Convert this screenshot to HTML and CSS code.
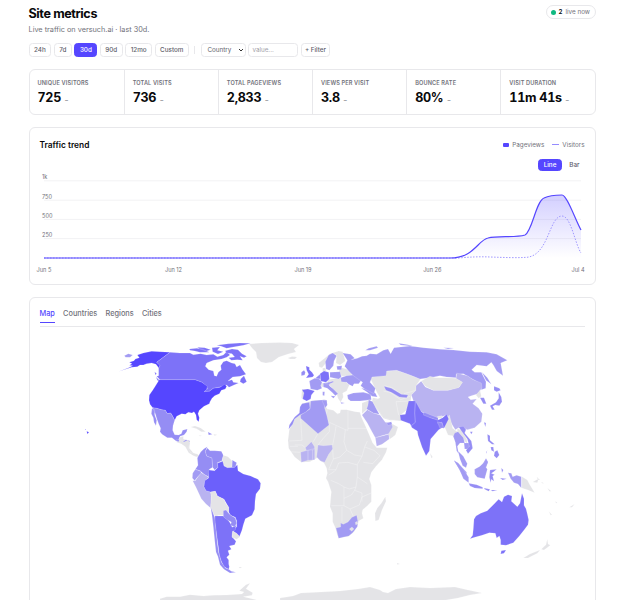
FILE: index.html
```
<!DOCTYPE html>
<html lang="en">
<head>
    <meta charset="utf-8">
    <title>Site metrics</title>
    <link rel="stylesheet" href="styles.css">
</head>
<body>
    <div class="page">
        <header class="header">
            <div>
                <h1>Site metrics</h1>
                <p class="subtitle">Live traffic on versuch.ai · last 30d.</p>
            </div>
            <div class="live"><span class="dot"></span><b>2</b><span>live now</span></div>
        </header>

        <div class="filters">
            <button>24h</button>
            <button>7d</button>
            <button class="active">30d</button>
            <button>90d</button>
            <button>12mo</button>
            <button>Custom</button>
            <span class="divider"></span>
            <div class="select">
                <select><option>Country</option></select>
                <svg viewBox="0 0 6 4"><path d="M1 1l2 2 2-2"/></svg>
            </div>
            <input type="text" placeholder="value...">
            <button class="add">+ Filter</button>
        </div>

        <section class="stats">
            <div class="stat"><h2>Unique visitors</h2><p>725 <small>–</small></p></div>
            <div class="stat"><h2>Total visits</h2><p>736 <small>–</small></p></div>
            <div class="stat"><h2>Total pageviews</h2><p>2,833 <small>–</small></p></div>
            <div class="stat"><h2>Views per visit</h2><p>3.8 <small>–</small></p></div>
            <div class="stat"><h2>Bounce rate</h2><p>80% <small>–</small></p></div>
            <div class="stat"><h2>Visit duration</h2><p>11m 41s <small>–</small></p></div>
        </section>

        <section class="card trend">
            <div class="card-head">
                <h3>Traffic trend</h3>
                <div class="legend">
                    <span class="key-box"></span><span>Pageviews</span>
                    <span class="key-line"></span><span>Visitors</span>
                </div>
            </div>
            <div class="toggle">
                <button class="active">Line</button>
                <button>Bar</button>
            </div>
            <svg class="chart" viewBox="34 172 557 104">
                <defs>
                    <linearGradient id="fill" x1="0" y1="0" x2="0" y2="1">
                        <stop offset="0" stop-color="#5546ff" stop-opacity=".26"/>
                        <stop offset="1" stop-color="#5546ff" stop-opacity="0"/>
                    </linearGradient>
                </defs>
                <path class="grid" d="M44 180.8H581M44 200.2H581M44 219.4H581M44 238.6H581"/>
                <path fill="url(#fill)" d="M450 258C474 258 478 240 488 238C498 235.500 515 238 525 235C532 232 536 201 544 198C550 195 556 195 562 195C567 195 575 219 581 230V258Z"/>
                <path class="visitors" d="M44 258H458C470 257 480 256.500 490 257C505 257.500 516 258 527 257.300C549 255 549 216 562 216C571 216 575 244 581 253"/>
                <path class="views" d="M44 258H450C474 258 478 240 488 238C498 235.500 515 238 525 235C532 232 536 201 544 198C550 195 556 195 562 195C567 195 575 219 581 230"/>
                <g class="ylabels">
                    <text x="42" y="179.300">1k</text>
                    <text x="42" y="198.600">750</text>
                    <text x="42" y="217.900">500</text>
                    <text x="42" y="237.200">250</text>
                </g>
                <g class="xlabels">
                    <text x="44" y="271.600">Jun 5</text>
                    <text x="173.500" y="271.600">Jun 12</text>
                    <text x="303" y="271.600">Jun 19</text>
                    <text x="432.300" y="271.600">Jun 26</text>
                    <text x="578" y="271.600">Jul 4</text>
                </g>
            </svg>
        </section>

        <section class="card places">
            <nav class="tabs">
                <a class="active">Map</a>
                <a>Countries</a>
                <a>Regions</a>
                <a>Cities</a>
            </nav>
            <svg class="map" viewBox="40 335 545 275">
                <!-- Greenland, Iceland, Arctic -->
                <path class="c0" d="M249 344L262 343 280 342.500 292 343 299 345 294 349 296 352 288 354 279 357 272 362 266 363 261 362 257 358 256 352 252 348ZM288 358L292 356.500 297 357 295 359 290 359Z"/>

                <!-- North and Central America -->
                <g transform="translate(80 335) scale(.33333)">
                    <path class="c5" d="M148 82L162 77 166 72 178 68 172 60 190 54 215 49 240 50 270 52 230 82 240 90 238 101 228 88 215 84 200 86 190 90 180 90 172 95 155 97 118 109 146 98 158 92 148 91 156 86Z"/>
                    <path class="c2" d="M133 62L145 56 158 60 150 67 137 67Z"/>
                    <path class="c4" d="M270 52L300 54 330 54 340 59 362 56 380 60 400 58 412 65 430 60 440 50 450 60 440 67 425 72 400 76 380 84 376 94 386 104 400 108 403 122 410 124 415 112 424 104 422 92 430 80 440 77 455 84 465 86 470 96 480 90 488 104 498 118 480 124 458 126 444 138 456 134 460 142 476 144 462 150 447 157 440 150 420 156 400 160 386 170 372 170 382 162 380 154 366 142 345 134 240 134 230 124 236 122 236 100 240 92 230 82Z"/>
                    <path class="c4" d="M328 42L350 40 366 42 388 52 360 52 345 48 330 46ZM352 37L374 38 392 44 380 48 360 42ZM396 38L420 36 412 46 430 50 414 57 398 50ZM410 31L445 26 480 24 512 25 490 31 460 36 440 40 424 34ZM436 47L456 42 474 44 486 56 500 64 492 68 480 64 488 76 472 74 454 76 446 68 464 66 456 56 438 54ZM482 132L492 122 500 140 490 146 480 140Z"/>
                    <path class="c4" d="M224 110L230 116 226 120ZM228 126L238 136 244 144 232 136Z"/>
                    <path class="c5" d="M238 134L345 134 366 142 382 154 380 164 372 170 388 169 400 160 420 157 434 148 440 154 436 162 424 166 418 176 404 182 396 190 390 200 388 206 372 214 358 226 354 236 358 248 356 260 350 254 348 240 342 230 336 234 325 232 316 238 305 236 290 244 284 256 278 244 272 234 262 236 256 226 244 224 230 220 218 218 210 208 207 196 208 180 218 166 228 150 234 140Z"/>
                    <path class="c3" d="M218 218L230 220 244 224 256 226 262 236 272 234 278 244 284 256 279 272 278 286 284 299 296 300 304 296 308 286 322 282 320 290 312 300 300 304 296 316 288 318 276 308 262 308 246 298 240 290 242 280 236 266 230 250 226 236ZM216 220L224 224 224 240 230 256 228 272 222 262 220 248 214 236Z"/>
                    <path class="c0" d="M296 314L300 306 310 304 310 312 330 318 328 340 340 354 352 360 344 364 326 350 318 334 304 326 290 322ZM332 276L345 273 362 279 377 290 364 290 350 281ZM400 298L412 299 404 302ZM356 301L366 302 360 304Z"/>
                    <path class="c3" d="M288 314L298 314 296 320 288 318ZM306 322L318 314 330 318 322 326 308 326ZM384 291L397 298 386 300Z"/>
                    <path class="c5" d="M20 289L27 292 22 297ZM16 282L18 284 15 284Z"/>
                </g>

                <!-- South America -->
                <g transform="translate(160 430) scale(.33333)">
                    <path class="c0" d="M60 30L72 36 84 30 90 40 84 54 92 68 112 72 120 80 108 80 98 76 86 68 76 50 60 38Z"/>
                    <path class="c3" d="M122 66L132 56 142 50 136 64 140 78 156 84 158 112 148 118 146 140 134 134 120 122 106 118 114 106 112 84Z"/>
                    <path class="c3" d="M142 54L150 62 165 62 184 64 190 76 186 92 172 98 174 112 164 120 158 112 156 84 140 78 136 64Z"/>
                    <path class="c0" d="M190 76L204 80 216 92 216 112 202 113 192 108 186 94Z"/>
                    <path class="c3" d="M217 90L230 98 226 112 216 112Z"/>
                    <path class="c2" d="M106 118L122 124 124 130 112 142 104 152 97 144 98 130Z"/>
                    <path class="c1" d="M98 152L106 152 114 140 124 128 134 134 146 142 134 154 132 170 138 182 152 186 154 200 152 234 138 222 124 206 108 172Z"/>
                    <path class="c5 brazil" d="M146 120L164 122 174 112 172 100 188 94 192 108 202 113 224 112 232 104 234 122 250 132 272 138 294 148 302 160 300 176 288 192 285 214 284 238 276 256 256 266 250 284 246 300 238 320 226 308 218 302 230 290 230 272 226 262 212 256 206 246 206 232 192 208 172 198 166 184 152 186 138 182 132 170 134 152 146 144Z"/>
                    <path class="c0" d="M152 186L166 184 172 198 192 208 197 220 206 232 206 248 196 240 190 256 176 256 166 260 158 246 152 234 154 200Z"/>
                    <path class="c4" d="M165 258L190 258 204 270 214 284 216 292 228 286 226 300 218 304 216 320 228 334 224 344 208 348 214 358 204 362 208 374 200 382 206 390 206 402 208 410 206 418 192 410 184 394 178 376 175 350 172 330 168 300 164 270Z"/>
                    <path class="c3" d="M190 242L198 240 206 250 212 256 226 264 230 280 224 290 212 286 214 276 202 270 190 260Z"/>
                    <path class="c0" d="M218 304L230 310 240 320 230 328 216 322Z"/>
                    <path class="c3" d="M152 232L158 246 164 262 168 300 172 340 176 368 184 396 196 414 206 418 214 424 228 427 210 429 192 418 180 404 174 380 168 366 164 330 160 290 156 256Z"/>
                    <path class="c0" d="M236 411L246 411 240 415ZM0 506L20 500 60 500 90 494 130 498 160 496 200 495 246 492 252 486 238 482 258 464 270 460 258 476 278 488 276 496 250 500 290 510 290 520 0 520Z"/>
                </g>

                <!-- Europe, Africa and the Middle East -->
                <g transform="translate(280 335) scale(.33333)">
                    <path class="c0" d="M66 206L80 202 104 196 138 194 142 200 136 212 142 222 160 226 172 236 180 234 182 224 200 224 226 230 240 232 244 246 256 272 268 300 278 324 290 338 322 338 318 352 306 374 288 394 274 412 268 432 274 450 274 500 262 512 248 524 246 535 250 550 236 558 234 568 222 590 206 604 176 610 172 600 166 578 158 560 158 535 150 515 152 490 154 470 144 440 138 430 142 415 140 400 132 384 118 376 112 368 90 380 64 382 44 366 26 340 24 316 28 284 44 250 60 234Z"/>
                    <path class="border" d="M142 222L138 244 148 270 148 290 130 310 114 330M62 250L66 316 28 318M114 296L100 320M204 226L204 286 196 284 148 262M204 280H260M196 284L192 320 200 346 180 366 160 372 158 342 M158 330L164 300 168 274M200 346L224 360 246 364 254 336 262 318M246 364L232 388 232 426 262 446M254 336L282 346 300 362 278 386 250 382M160 372L146 404 168 404 176 384 204 382 232 390M146 420L162 410 168 404M152 436L176 446 192 456 208 462 228 456 232 426M192 456L192 512 154 512M192 490L214 480 224 466 228 456M192 512L210 522 238 510 246 486 274 474M224 466L246 474 246 500M186 516L186 560M210 522L222 548M44 330L66 330 76 338M26 350L62 352M30 334L54 334"/>
                    <path class="c2" d="M92 198L134 194 134 220 140 240 147 270 114 296 62 250 62 240 90 222Z"/>
                    <path class="c3" d="M66 206L88 202 90 220 76 232 60 240 44 252 38 268 26 283 28 270 44 246 58 234 60 216Z"/>
                    <path class="c1" d="M62 352L82 346 104 340 104 374 84 376 64 382ZM76 338L94 320 104 336 102 344 80 347ZM114 330L130 332 156 330 158 342 146 358 134 382 122 378 110 366Z"/>
                    <path class="border" d="M84 346V376M98 344V374"/>
                    <path class="c2" d="M168 579L182 576 182 564 190 568 204 561 216 547 230 541 234 561 232 575 218 593 206 603 188 607 176 610Z"/>
                    <path class="c0" d="M208 582L216 576 222 582 215 589ZM226 562L232 559 234 567 227 569Z"/>
                    <path class="c0" d="M316 485L318 499 306 525 296 555 286 558 285 535 292 519 304 505Z"/>

                    <path class="c0" d="M66 162L64 190 72 192 76 168ZM116 84L134 70 150 56 176 48 188 50 196 78 180 90 168 84 170 60 158 56 144 70 138 84 126 98 118 96ZM178 96L206 104 218 122 184 124 178 110ZM140 134L184 128 208 150 200 168 188 174 190 186 182 202 174 190 170 176 156 158 146 148ZM118 142L136 146 128 156 120 154ZM128 100L136 98 138 108 128 110Z"/>
                    <path class="c2" d="M88 138L104 130 116 130 126 142 122 152 126 160 112 166 92 162Z"/>
                    <path class="c4" d="M66 164L84 162 104 168 94 180 92 192 80 198 68 192 72 174Z"/>
                    <path class="c4" d="M78 93L88 97 88 104 96 112 102 121 98 126 78 129 86 118 80 106ZM120 116L132 108 146 112 148 132 138 142 122 138Z"/>
                    <path class="c3" d="M64 112L72 106 76 112 74 120 64 122ZM106 130L120 118 122 132Z"/>
                    <path class="c2" d="M150 112L180 110 184 126 176 132 150 127ZM138 102L136 80 146 60 158 54 170 62 162 78 160 92 148 106ZM130 144L148 142 148 152 160 162 174 176 166 182 156 172 142 160 130 156ZM182 128L200 122 220 120 244 136 236 146 222 146 218 154 206 148 200 142 184 140ZM202 180L220 174 250 172 272 178 274 194 240 198 212 198 204 192ZM244 160L262 162 286 174 292 186 276 184 262 172Z"/>
                    <path class="c2" d="M128 170L134 170 133 182 128 181ZM152 182L166 184 160 190ZM182 202L194 204 184 206ZM170 94L186 92 184 104 172 104ZM134 146L160 138 160 142 146 148ZM126 197L140 195 142 210 136 218Z"/>
                    <path class="c0" d="M246 204L268 196 262 222 246 236ZM278 188L300 192 330 200 355 196 360 230 362 256 330 256 310 250 290 222 276 202ZM336 266L354 276 346 300 330 312 324 296Z"/>
                    <path class="c1" d="M246 240L262 224 280 234 300 240 316 262 334 264 338 276 326 296 300 304 286 308 276 290 262 264ZM286 308L326 298 328 312 306 328 290 334Z"/>
                    <path class="c2" d="M266 194L278 200 288 220 298 238 280 234 260 222 264 210ZM320 264L334 260 336 268 324 272Z"/>
                </g>

                <!-- Asia -->
                <g transform="translate(380 335) scale(.33333)">
                    <path class="c0" d="M-30 128L0 116 20 108 50 106 80 116 122 132 108 152 108 166 94 180 92 200 84 222 62 240 62 258 34 254 10 248 -22 200 0 188 -10 170Z"/>
                    <path class="border" d="M10 168L30 172 62 194 90 184M14 152L36 158 76 186M48 200L90 198M48 200L56 240M108 166L72 176"/>
                    <path class="c3" d="M12 154L34 160 64 178 84 180 80 188 58 186 34 172 18 166Z"/>
                    <path class="c2" d="M-112 54L-88 58 -76 70 -86 74 -68 70 -54 64 -40 62 -30 56 -10 58 10 46 24 42 32 56 42 38 90 33 130 38 180 43 220 45 270 50 320 52 350 58 382 76 362 84 369 122 350 108 340 90 334 82 320 94 290 90 275 104 284 112 304 112 318 140 317 160 304 164 302 146 276 132 250 116 228 118 228 128 200 126 180 122 150 128 120 132 100 124 80 116 50 106 20 108 18 122 -24 126 -30 142 -14 160 -18 176 -46 162 -58 152 -52 142 -66 132 -80 122 -94 108 -106 94 -98 76Z"/>
                    <path class="c2" d="M-44 46L-34 40 -10 34 -6 38 -30 46ZM56 25L84 29 100 34 62 30ZM190 38L222 39 204 42ZM306 112L322 128 334 148 318 136Z"/>
                    <path class="c1" d="M94 180L108 166 108 152 124 138 136 156 160 166 204 166 238 156 246 142 228 132 230 114 262 122 280 134 304 144 306 158 294 176 274 182 264 186 272 194 290 192 278 206 296 220 307 236 304 260 284 278 262 284 240 276 226 284 212 262 200 240 176 248 150 244 124 230 106 214Z"/>
                    <path class="c0" d="M124 138L150 124 166 128 200 128 228 130 248 142 236 158 204 166 160 166 136 154ZM288 180L300 166 304 184 296 190ZM198 254L208 240 214 262 218 280 232 290 234 310 228 322 218 302 204 300 194 276ZM232 280L244 286 260 312 262 326 248 312 232 298ZM150 354L158 366 154 370ZM172 244L186 242 186 250 174 250Z"/>
                    <path class="c4" d="M86 198L106 198 124 230 152 248 176 254 188 248 200 238 206 252 192 280 186 278 176 284 152 312 148 348 138 362 126 336 114 300 112 288 96 278 90 266 62 256 60 240 76 238Z"/>
                    <path class="border" d="M106 200L104 234 106 262 94 272M172 264L186 262 190 278"/>
                    <path class="c3" d="M132 232L152 240 174 248 174 256 150 248 130 240ZM172 260L186 264 190 278 180 280Z"/>
                    <path class="c2" d="M224 294L234 290 250 308 254 324 240 324 232 334 236 356 230 348 226 322 220 304ZM252 324L270 324 266 342 254 342ZM234 348L250 364 262 386 258 398 248 392 240 372ZM222 376L236 386 260 412 258 424 246 418ZM284 404L300 396 310 384 318 370 324 382 318 396 316 420 290 420Z"/>
                    <path class="c3" d="M236 276L250 274 258 284 254 294 274 318 278 340 264 356 258 346 268 334 262 312 250 296ZM300 188L312 188 319 206 310 206ZM342 154L358 160 362 166 350 170 342 166ZM356 172L364 186 366 200 358 212 346 210 338 214 344 224 336 224 330 212 348 202 356 190ZM312 262L318 264 316 276ZM270 290L278 290 274 298ZM322 298L330 302 330 316 344 328 336 328 324 318ZM332 336L340 336 342 350 334 346ZM344 350L352 346 358 360 350 370 342 362ZM318 352L322 346 318 356Z"/>
                </g>

                <!-- Oceania -->
                <g transform="translate(440 430) scale(.33333)">
                    <path class="c4" d="M90 326L98 316 100 296 102 268 108 258 122 250 142 242 160 224 176 208 186 216 192 200 204 194 216 198 214 214 232 230 240 220 246 190 252 206 252 226 258 236 262 252 266 270 264 284 254 298 238 318 220 338 198 346 182 344 182 330 178 318 170 324 166 310 148 308 126 316 104 322ZM184 362L198 360 192 370 182 372Z"/>
                    <path class="c2" d="M42 92L54 98 72 120 86 142 86 158 70 146 58 118ZM104 118L118 110 130 100 138 86 144 96 138 112 142 118 134 146 112 142 104 132ZM204 128L214 130 218 140 230 136 244 140 244 174 234 162 222 158 212 146Z"/>
                    <path class="c3" d="M86 160L110 164 128 172 128 176 104 174 90 168ZM132 174L150 178 146 184 134 178ZM152 180L172 180 158 184ZM150 120L170 118 160 126 154 130 164 134 158 138 162 154 154 148 152 158 148 142ZM184 114L190 120 186 128ZM180 144L200 146 188 150Z"/>
                    <path class="c0" d="M246 140L262 150 268 162 284 188 264 180 246 174ZM278 156L296 146 292 158ZM290 140L300 150 294 150ZM304 156L312 160 306 160ZM322 174L334 184 328 184ZM326 244L336 254 332 256ZM346 214L352 218 348 220ZM388 232L404 222 396 232ZM250 384L270 372 300 360 292 370 264 384ZM304 358L318 344 322 328 324 342 331 346 312 360Z"/>
                </g>

                <!-- Antarctica -->
                <path class="c0" d="M280 598L293 596 301 593 321 592 340 591 358 589 370 587 380 590 383 592 388 593 396 589 410 587 430 588 455 587 468 590 482 593 470 595 458 598 440 601 440 610 280 610ZM397 563L400 564 397 564.500Z"/>
            </svg>
        </section>
    </div>
</body>
</html>
```

FILE: styles.css
```
* {
    box-sizing: border-box;
}
body {
    margin: 0;
    height: 600px;
    overflow: hidden;
    background: #fff;
    color: #09090b;
    font-family: Inter, sans-serif;
    font-size: 7px;
}
h1, h2, h3, p {
    margin: 0;
}
.page {
    width: 567px;
    margin-left: 28.5px;
    padding-top: 5px;
}
.header {
    display: flex;
    justify-content: space-between;
    align-items: flex-start;
    height: 38px;
}
h1 {
    font-size: 12.600px;
    line-height: 17px;
    font-weight: 700;
    letter-spacing: -0.4px;
}
.subtitle {
    margin-top: 2px;
    font-size: 7.300px;
    line-height: 11px;
    color: #71717a;
}
.live {
    display: flex;
    align-items: center;
    gap: 3px;
    height: 14px;
    padding: 0 4.500px 0 4px;
    border: 1px solid #e8e8eb;
    border-radius: 7px;
    font-size: 6.300px;
    color: #71717a;
}
.live b {
    color: #09090b;
    font-weight: 600;
}
.dot {
    width: 5px;
    height: 5px;
    border-radius: 50%;
    background: #10b981;
}
.filters {
    display: flex;
    align-items: center;
    gap: 2.500px;
    height: 14px;
}
button, select, input {
    height: 14px;
    padding: 0 4.500px;
    border: 1px solid #e8e8eb;
    border-radius: 3.500px;
    background: #fff;
    font: 500 6.300px Inter, sans-serif;
    color: #60606a;
}
button.active {
    background: #5546ff;
    border-color: #5546ff;
    color: #fff;
}
.divider {
    width: 1px;
    height: 8px;
    margin: 0 3px;
    background: #e8e8eb;
}
.select {
    display: grid;
    align-items: center;
}
.select select, .select svg {
    grid-area: 1 / 1;
}
.select select {
    width: 45px;
    padding-left: 5.500px;
    appearance: none;
    font-weight: 400;
}
.select svg {
    justify-self: end;
    width: 6px;
    margin-right: 2px;
    fill: none;
    stroke: #333;
}
input {
    width: 50px;
    padding: 0 3px;
    font-weight: 400;
}
input::placeholder {
    color: #a1a1aa;
}
.add {
    padding: 0 3px;
}
.stats {
    display: grid;
    grid-template-columns: repeat(6, 1fr);
    height: 46px;
    margin-top: 12px;
    border: 1px solid #e8e8eb;
    border-radius: 6px;
}
.stat {
    padding: 9px 8px 0;
    border-left: 1px solid #e8e8eb;
}
.stat:first-child {
    border-left: 0;
}
.stat h2 {
    font-size: 5.600px;
    line-height: 8px;
    font-weight: 600;
    letter-spacing: 0.130px;
    text-transform: uppercase;
    white-space: nowrap;
    color: #71717a;
}
.stat p {
    font-size: 12.600px;
    line-height: 21px;
    font-weight: 700;
    font-variant-numeric: tabular-nums;
    letter-spacing: -0.300px;
    white-space: nowrap;
}
.stat small {
    margin-left: 1px;
    font-size: 6px;
    font-weight: 500;
    color: #71717a;
}
.card {
    margin-top: 12px;
    border: 1px solid #e8e8eb;
    border-radius: 6px;
}
.trend {
    height: 158px;
    padding-top: 10.500px;
}
.card-head {
    display: flex;
    justify-content: space-between;
    align-items: center;
    height: 12px;
    padding: 0 10px;
}
h3 {
    font-size: 8.400px;
    font-weight: 600;
}
.legend {
    display: flex;
    align-items: center;
    gap: 3px;
    font-size: 6.300px;
    color: #71717a;
}
.key-box {
    width: 6px;
    height: 4px;
    border-radius: 1px;
    background: #5546ff;
}
.key-line {
    width: 7px;
    height: 1px;
    margin-left: 5px;
    background: #958cff;
}
.toggle {
    display: flex;
    justify-content: flex-end;
    gap: 2px;
    height: 12px;
    margin: 8.500px 9.500px 0;
}
.toggle button {
    height: 12px;
}
.toggle button:not(.active) {
    border-color: transparent;
}
.chart {
    display: block;
    width: 557px;
    height: 104px;
    margin: 1px 0 0 4.500px;
}
.chart path {
    stroke-width: 1;
}
.chart .grid {
    fill: none;
    stroke: #f2f2f4;
}
.chart .views {
    fill: none;
    stroke: #5546ff;
    stroke-width: 1.200;
}
.chart .visitors {
    fill: none;
    stroke: #958cff;
    stroke-width: .900;
    stroke-dasharray: 1.500 1.500;
}
.chart text {
    font-size: 5.600px;
    fill: #71717a;
}
.xlabels {
    text-anchor: middle;
}
.places {
    height: 340px;
    padding: 10px 10px 0;
}
.tabs {
    display: flex;
    gap: 8.200px;
    height: 19px;
    border-bottom: 1px solid #e8e8eb;
    font-size: 7.350px;
    line-height: 11px;
    font-weight: 500;
    color: #71717a;
}
.tabs a {
    height: 15px;
    border-bottom: 1px solid transparent;
}
.tabs .active {
    color: #5546ff;
    border-color: #5546ff;
}
.map {
    display: block;
    width: 545px;
    height: 275px;
    margin: 8px 0 0 .500px;
}
.map path {
    stroke: #fff;
    stroke-opacity: .600;
    stroke-width: .800;
    stroke-linejoin: round;
}
.map > path {
    stroke-width: .300;
}
.map .c0 {
    fill: #e4e4e7;
}
.map .c1 {
    fill: #b9b3f1;
}
.map .c2 {
    fill: #a29bf3;
}
.map .c3 {
    fill: #958df4;
}
.map .c4 {
    fill: #7d72f8;
}
.map .c5 {
    fill: #5546ff;
}
.map .brazil {
    fill: #6c60fb;
}
.map .border {
    fill: none;
    stroke-width: 1.500;
}
```
